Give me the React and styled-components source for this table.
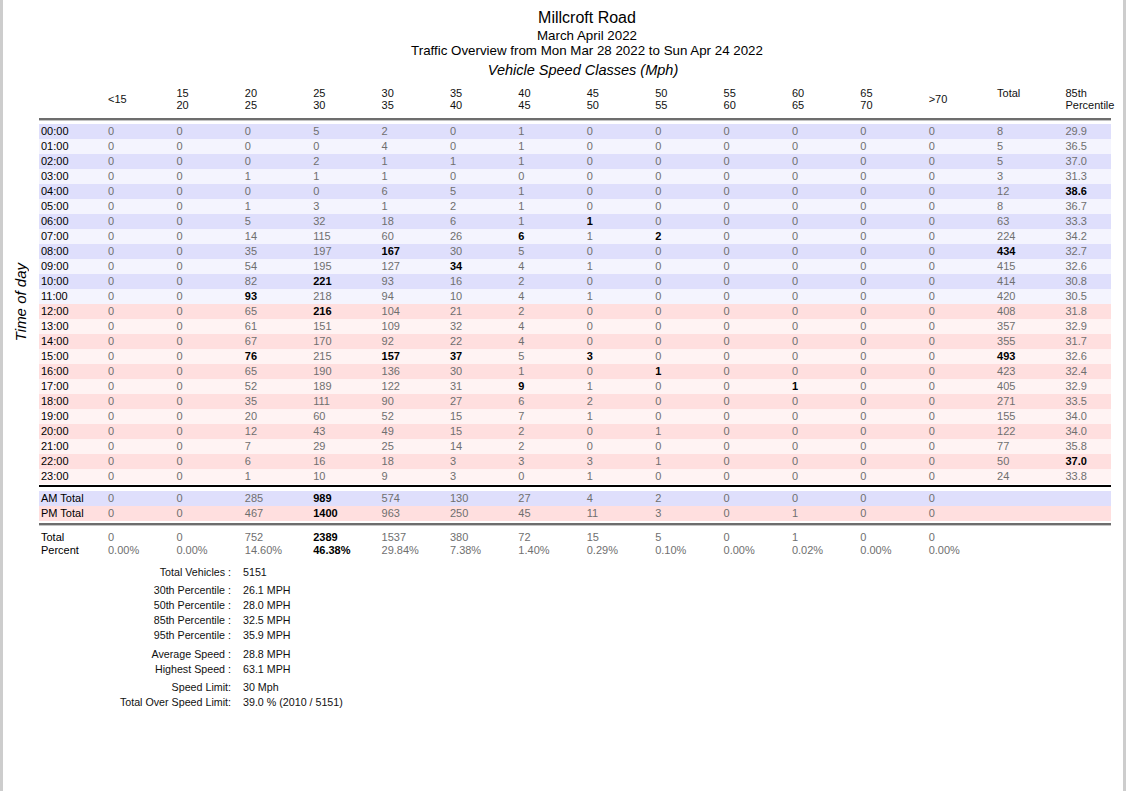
import React from 'react';
import styled, { createGlobalStyle } from 'styled-components';

const GlobalStyle = createGlobalStyle`
  html, body { margin: 0; padding: 0; background: #cdcdcd; }
  body { font-family: "Liberation Sans", Arial, Helvetica, sans-serif; }
  * { box-sizing: border-box; }
`;

const COLS = '67px repeat(14, 68.4px) 1fr';

const Page = styled.div`
  margin-left: 3px;
  width: 1120px;
  min-height: 791px;
  background: #fff;
  padding: 8px 12px 40px 36px;
  color: #000;
`;

const Heading = styled.header`
  padding-left: 24px;
  text-align: center;
`;

const Title = styled.div`
  font-size: 16px;
  line-height: 19px;
`;

const SubTitle = styled.div`
  font-size: 13.33px;
  line-height: 15px;
  margin-top: ${(p) => p.$gap || 0}px;
`;

const ClassesTitle = styled.div`
  margin-top: 3px;
  padding-left: 16px;
  text-align: center;
  font-size: 14.5px;
  font-style: italic;
  line-height: 18px;
`;

const HeaderRow = styled.div`
  display: grid;
  grid-template-columns: ${COLS};
  margin-top: 9px;
  padding-bottom: 7px;
  border-bottom: 2px solid #6d6d6d;
  box-shadow: 0 1px 0 #c4c4c4;
`;

const HeadCell = styled.div`
  padding-left: 2px;
  font-size: 11px;
  line-height: 11.5px;
  color: #111;
  align-self: ${(p) => (p.$center ? 'center' : 'start')};
  white-space: nowrap;
`;

const HoursBlock = styled.div`
  display: flex;
  margin-left: -36px;
  margin-top: 4px;
`;

const SideLabel = styled.div`
  width: 36px;
  display: flex;
  align-items: center;
  justify-content: center;
`;

const SideText = styled.span`
  writing-mode: vertical-rl;
  transform: rotate(180deg);
  font-size: 15px;
  font-style: italic;
  line-height: 18px;
  padding-top: 4px;
`;

const Rows = styled.div`
  flex: 1;
`;

const tones = {
  blue: '#dfdffc',
  blueLight: '#f4f4fe',
  pink: '#ffdfdf',
  pinkLight: '#fff3f3',
  none: 'transparent',
};

const Row = styled.div`
  display: grid;
  grid-template-columns: ${COLS};
  height: ${(p) => p.$h || 15}px;
  line-height: ${(p) => p.$h || 15}px;
  font-size: 11px;
  background: ${(p) => tones[p.$tone || 'none']};
`;

const LabelCell = styled.div`
  padding-left: 2px;
  color: #000;
  white-space: nowrap;
`;

const Cell = styled.div`
  padding-left: 2px;
  color: ${(p) => (p.$bold ? '#000' : '#6f6f6f')};
  font-weight: ${(p) => (p.$bold ? 700 : 400)};
  white-space: nowrap;
`;

const BlackRule = styled.div`
  margin-top: 1px;
  height: 2px;
  background: #000;
`;

const TotalsBlock = styled.div`
  margin-top: 4px;
`;

const GrayRule = styled.div`
  margin-top: 2px;
  height: 2px;
  background: #6d6d6d;
  box-shadow: 0 1px 0 #c4c4c4;
`;

const SumBlock = styled.div`
  margin-top: 6px;
`;

const Summary = styled.div`
  margin-top: 8px;
  display: flex;
  flex-direction: column;
`;

const SummaryGroup = styled.div`
  display: grid;
  grid-template-columns: 192px auto;
  column-gap: 12px;
  margin-top: ${(p) => p.$gap || 0}px;
  font-size: 10.7px;
  line-height: 15px;
  color: #111;
`;

const SumLabel = styled.div`
  text-align: right;
  white-space: nowrap;
`;

const SumValue = styled.div`
  white-space: nowrap;
`;

const headers = [
  ['<15'],
  ['15', '20'],
  ['20', '25'],
  ['25', '30'],
  ['30', '35'],
  ['35', '40'],
  ['40', '45'],
  ['45', '50'],
  ['50', '55'],
  ['55', '60'],
  ['60', '65'],
  ['65', '70'],
  ['>70'],
  ['Total'],
  ['85th', 'Percentile'],
];

const hours = [
  '0 0 0 5 2 0 1 0 0 0 0 0 0 8 29.9',
  '0 0 0 0 4 0 1 0 0 0 0 0 0 5 36.5',
  '0 0 0 2 1 1 1 0 0 0 0 0 0 5 37.0',
  '0 0 1 1 1 0 0 0 0 0 0 0 0 3 31.3',
  '0 0 0 0 6 5 1 0 0 0 0 0 0 12 *38.6',
  '0 0 1 3 1 2 1 0 0 0 0 0 0 8 36.7',
  '0 0 5 32 18 6 1 *1 0 0 0 0 0 63 33.3',
  '0 0 14 115 60 26 *6 1 *2 0 0 0 0 224 34.2',
  '0 0 35 197 *167 30 5 0 0 0 0 0 0 *434 32.7',
  '0 0 54 195 127 *34 4 1 0 0 0 0 0 415 32.6',
  '0 0 82 *221 93 16 2 0 0 0 0 0 0 414 30.8',
  '0 0 *93 218 94 10 4 1 0 0 0 0 0 420 30.5',
  '0 0 65 *216 104 21 2 0 0 0 0 0 0 408 31.8',
  '0 0 61 151 109 32 4 0 0 0 0 0 0 357 32.9',
  '0 0 67 170 92 22 4 0 0 0 0 0 0 355 31.7',
  '0 0 *76 215 *157 *37 5 *3 0 0 0 0 0 *493 32.6',
  '0 0 65 190 136 30 1 0 *1 0 0 0 0 423 32.4',
  '0 0 52 189 122 31 *9 1 0 0 *1 0 0 405 32.9',
  '0 0 35 111 90 27 6 2 0 0 0 0 0 271 33.5',
  '0 0 20 60 52 15 7 1 0 0 0 0 0 155 34.0',
  '0 0 12 43 49 15 2 0 1 0 0 0 0 122 34.0',
  '0 0 7 29 25 14 2 0 0 0 0 0 0 77 35.8',
  '0 0 6 16 18 3 3 3 1 0 0 0 0 50 *37.0',
  '0 0 1 10 9 3 0 1 0 0 0 0 0 24 33.8',
].map((s) => s.split(' '));

const amTotal = '0 0 285 *989 574 130 27 4 2 0 0 0 0'.split(' ');
const pmTotal = '0 0 467 *1400 963 250 45 11 3 0 1 0 0'.split(' ');
const total = '0 0 752 *2389 1537 380 72 15 5 0 1 0 0'.split(' ');
const percent =
  '0.00% 0.00% 14.60% *46.38% 29.84% 7.38% 1.40% 0.29% 0.10% 0.00% 0.02% 0.00% 0.00%'.split(' ');

const summary = [
  { gap: 0, items: [['Total Vehicles :', '5151']] },
  {
    gap: 3,
    items: [
      ['30th Percentile :', '26.1 MPH'],
      ['50th Percentile :', '28.0 MPH'],
      ['85th Percentile :', '32.5 MPH'],
      ['95th Percentile :', '35.9 MPH'],
    ],
  },
  {
    gap: 4,
    items: [
      ['Average Speed :', '28.8 MPH'],
      ['Highest Speed :', '63.1 MPH'],
    ],
  },
  {
    gap: 3,
    items: [
      ['Speed Limit:', '30 Mph'],
      ['Total Over Speed Limit:', '39.0 % (2010 / 5151)'],
    ],
  },
];

function Values({ values }) {
  return values.map((v, i) => {
    const bold = v.startsWith('*');
    return (
      <Cell key={i} $bold={bold}>
        {bold ? v.slice(1) : v}
      </Cell>
    );
  });
}

const pad = (n) => String(n).padStart(2, '0') + ':00';

export default function App() {
  return (
    <>
      <GlobalStyle />
      <Page>
        <Heading>
          <Title>Millcroft Road</Title>
          <SubTitle $gap={1}>March April 2022</SubTitle>
          <SubTitle>Traffic Overview from Mon Mar 28 2022 to Sun Apr 24 2022</SubTitle>
        </Heading>
        <ClassesTitle>Vehicle Speed Classes (Mph)</ClassesTitle>

        <HeaderRow>
          <HeadCell />
          {headers.map((h, i) => (
            <HeadCell key={i} $center={h.length === 1 && h[0] !== 'Total'}>
              {h.map((line, j) => (
                <div key={j}>{line}</div>
              ))}
            </HeadCell>
          ))}
        </HeaderRow>

        <HoursBlock>
          <SideLabel>
            <SideText>Time of day</SideText>
          </SideLabel>
          <Rows>
            {hours.map((vals, h) => {
              const pm = h >= 12;
              const dark = h % 2 === 0;
              const tone = pm ? (dark ? 'pink' : 'pinkLight') : dark ? 'blue' : 'blueLight';
              return (
                <Row key={h} $tone={tone}>
                  <LabelCell>{pad(h)}</LabelCell>
                  <Values values={vals} />
                </Row>
              );
            })}
          </Rows>
        </HoursBlock>

        <BlackRule />

        <TotalsBlock>
          <Row $tone="blue">
            <LabelCell>AM Total</LabelCell>
            <Values values={amTotal} />
          </Row>
          <Row $tone="pink">
            <LabelCell>PM Total</LabelCell>
            <Values values={pmTotal} />
          </Row>
        </TotalsBlock>

        <GrayRule />

        <SumBlock>
          <Row $h={13}>
            <LabelCell>Total</LabelCell>
            <Values values={total} />
          </Row>
          <Row $h={13}>
            <LabelCell>Percent</LabelCell>
            <Values values={percent} />
          </Row>
        </SumBlock>

        <Summary>
          {summary.map((g, gi) => (
            <SummaryGroup key={gi} $gap={g.gap}>
              {g.items.map(([l, v], i) => (
                <React.Fragment key={i}>
                  <SumLabel>{l}</SumLabel>
                  <SumValue>{v}</SumValue>
                </React.Fragment>
              ))}
            </SummaryGroup>
          ))}
        </Summary>
      </Page>
    </>
  );
}
